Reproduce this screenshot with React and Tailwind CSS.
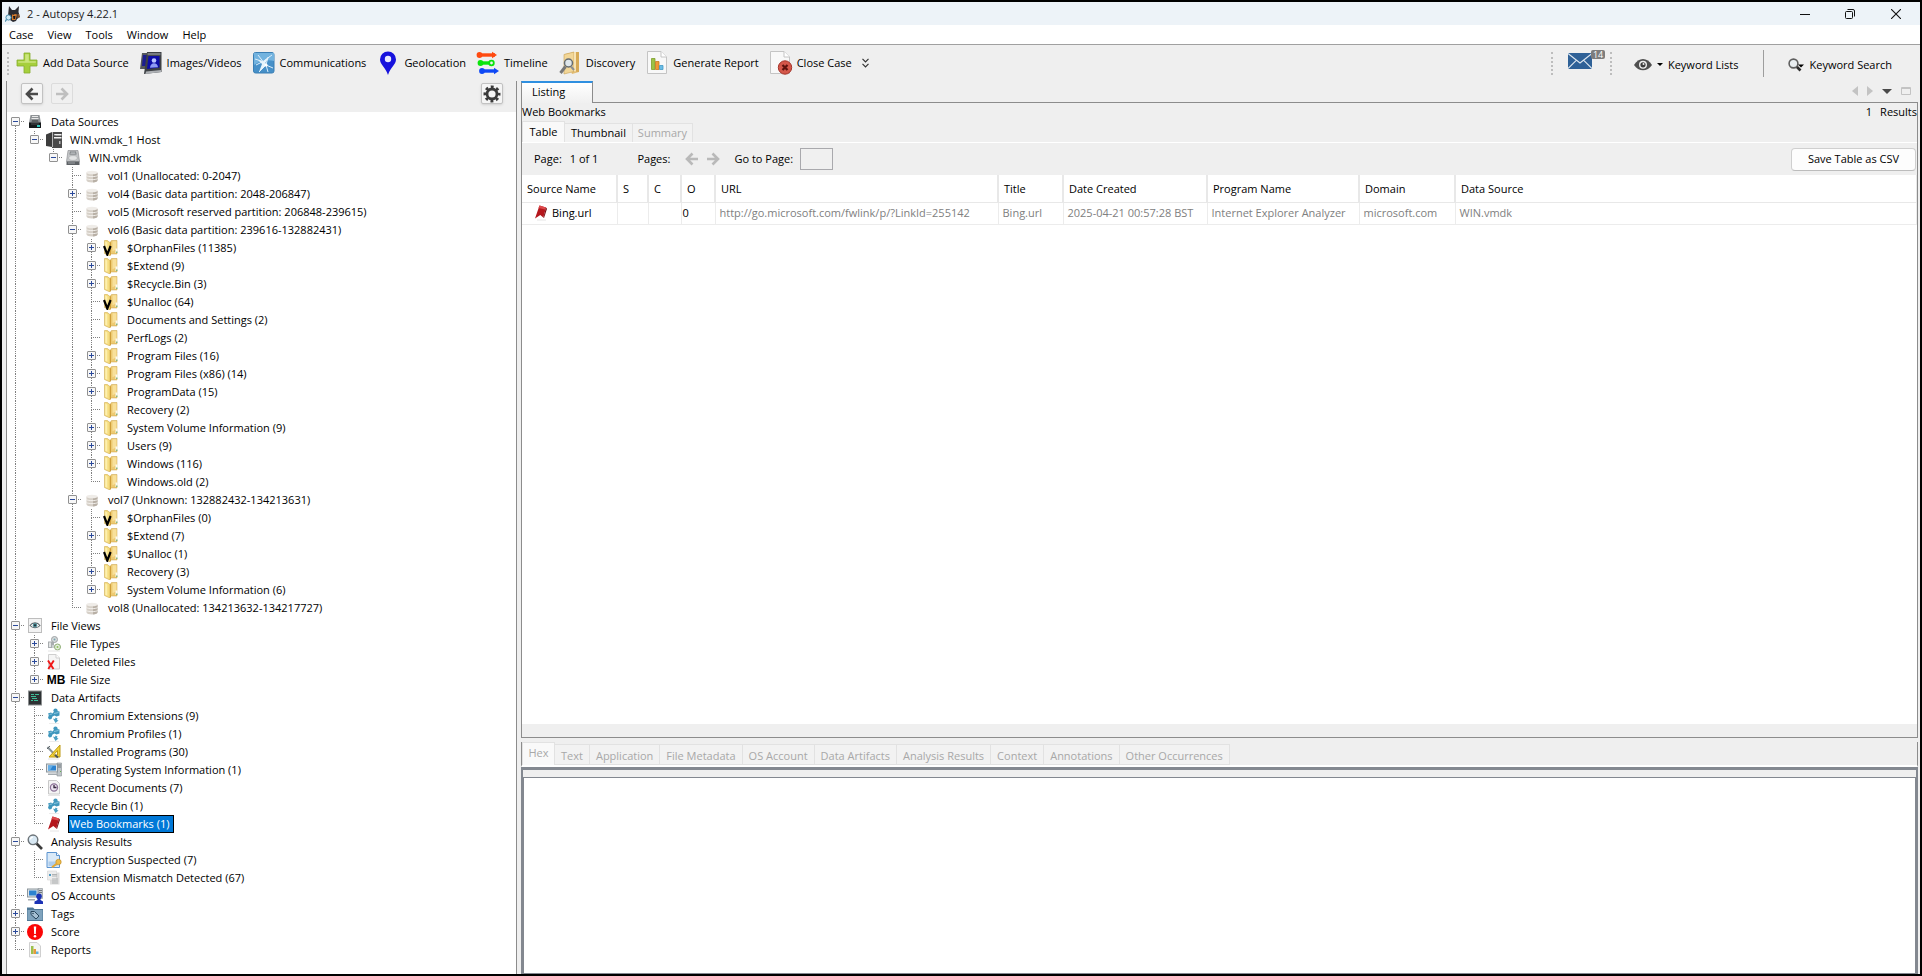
import { useState } from 'react';

/* ---------- Tree icons ---------- */

function Svg({ size = 16, box = 16, children }) {
  return (
    <svg width={size} height={size} viewBox={`0 0 ${box} ${box}`} className="shrink-0" aria-hidden="true">
      {children}
    </svg>
  );
}

const DrivesIcon = () => (
  <Svg>
    <path d="M3.500 1h9l1.500 8H2z" fill="#8f9396" />
    <path d="M5 2h6v1H5zM4.500 4h7v1h-7z" fill="#e8e8e8" />
    <path d="M5 6h6l.5 2h-7z" fill="#5b5e60" />
    <path d="M2 8.500h12V13.500a.5.5 0 0 1-.5.500h-11a.5.5 0 0 1-.5-.5z" fill="#16191b" />
    <path d="M4 9.500h8v1H4z" fill="#4a4e50" />
    <rect x="10" y="11" width="3" height="2" fill="#35c9c0" />
  </Svg>
);

const HostIcon = () => (
  <Svg>
    <path d="M0 2.500 6 0v15L0 14z" fill="#3d3d3d" />
    <path d="M6 0h10v16H6z" fill="#4b4b4b" />
    <path d="M6 0h1v15H6z" fill="#b5b5b5" />
    <path d="M8 2h7.500v1.500H8zM8 5h7.500v1.500H8z" fill="#f4f4f4" />
    <path d="M8 2.500 10 3.500H8z" fill="#4b4b4b" />
    <rect x="13" y="9" width="1.500" height="3" fill="#b8b8b8" />
  </Svg>
);

const DiskIcon = () => (
  <Svg>
    <path d="M3 .5h10l1.500 11h-13z" fill="#c3c5c7" stroke="#84878a" strokeWidth=".6" />
    <path d="M5 1.500h6l.5 3h-7z" fill="#6f7377" />
    <path d="M5.500 2.300h5M5.300 3.500h5.300" stroke="#dcdfe1" strokeWidth=".6" />
    <ellipse cx="8" cy="8" rx="4.300" ry="2.400" fill="#e3e4e5" stroke="#a4a7a9" strokeWidth=".6" />
    <path d="M1.500 11.500h13V15h-13z" fill="#5e6266" />
    <path d="M3 12.500h7v1H3z" fill="#9fa3a6" />
  </Svg>
);

const VolumeIcon = () => (
  <Svg>
    <path d="M2.500 4.500v8c0 1.300 2.500 2 5.500 2s5.500-.7 5.500-2v-8z" fill="#d6d0c8" />
    <path d="M9 5h4.500v7.500c0 1-2 1.800-4.500 2z" fill="#b8b0a6" />
    <ellipse cx="8" cy="4.500" rx="5.500" ry="1.800" fill="#efece8" />
    <path d="M2.500 7.500c1 1.500 10 1.500 11 0M2.500 10.500c1 1.500 10 1.500 11 0" fill="none" stroke="#f6f4f1" strokeWidth=".9" />
  </Svg>
);

const FolderShape = () => (
  <>
    <path d="M7 2.500 8.500 .5h5.500v13.500H7z" fill="#edca72" stroke="#c9a24a" strokeWidth=".5" />
    <path d="M9.500 1.300h4v8l-4 2z" fill="#f8e09a" />
    <path d="M1.500 .5 4 .3 7 2.500V16l-5.500-2.500z" fill="#f6dd80" stroke="#c79f3d" strokeWidth=".5" />
    <path d="M7 2.500 8 2v12.500L7 16z" fill="#cf9f3a" />
    <path d="M2.300 1.500 4.300 2.500v11.200l-2-.9z" fill="#fdf0b0" />
    <rect x="12.500" y="8.500" width="2" height="4.500" fill="#fbfaf0" />
    <rect x="13.200" y="11.500" width="1.200" height="1.500" fill="#6aa667" />
  </>
);

const FolderIcon = () => (
  <Svg>
    <FolderShape />
  </Svg>
);

const VirtualFolderIcon = () => (
  <Svg>
    <FolderShape />
    <path d="M1 6 4.300 14.500 7.600 6" fill="none" stroke="#000" strokeWidth="2.200" />
  </Svg>
);

const ViewsIcon = () => (
  <Svg>
    <rect x="1.500" y=".5" width="13" height="14" fill="#f3f3f3" stroke="#bdbdbd" />
    <path d="M3 7.500c2.500-3.500 7.500-3.500 10 0-2.500 3-7.500 3-10 0z" fill="#fff" stroke="#5f676b" strokeWidth="1.100" />
    <circle cx="8" cy="7.200" r="2.200" fill="#4e8b96" />
    <circle cx="8" cy="7.200" r="1" fill="#1d2b30" />
  </Svg>
);

const FileTypesIcon = () => (
  <Svg>
    <path d="M2 5.500h6V12H2z" fill="#a9adaf" />
    <path d="M3 6.500h2V11H3z" fill="#e2e4e5" />
    <circle cx="8.500" cy="3.500" r="3" fill="#d6dadb" stroke="#9da2a4" />
    <circle cx="8.500" cy="3.500" r="1" fill="#78a4ae" />
    <path d="M6 9h4v3H6z" fill="#ccd0d1" />
    <circle cx="11.500" cy="11" r="3" fill="#e3eedb" stroke="#8fae76" />
    <circle cx="11.500" cy="11" r="1" fill="#8fc25f" />
    <path d="M2 15h12" stroke="#e4e4e4" />
  </Svg>
);

const PageShape = () => (
  <path d="M2.500 .5h7.500l3.500 3.500v11h-11z" fill="#f5f5f5" stroke="#cfcfcf" />
);

const DeletedIcon = () => (
  <Svg>
    <PageShape />
    <path d="M10 .5V4h3.500" fill="#fff" stroke="#cfcfcf" />
    <path d="M2 6.500 7.500 15M7.800 6.500 2.300 15" stroke="#f01818" strokeWidth="1.900" />
  </Svg>
);

const SizeIcon = () => (
  <span className="flex w-0 justify-center">
    <b className="ml-[4px] font-['Liberation_Sans',sans-serif] text-[12px] leading-none font-bold">MB</b>
  </span>
);

const ArtifactsIcon = () => (
  <Svg>
    <rect x="1.500" y="1" width="13" height="14" fill="#2d3133" stroke="#8c8f90" />
    <path d="M4 4.500h3M8 4.500h4M4 6.500h5M5 8.500h5M4 10.500h2M7 10.500h4" stroke="#3fbf9a" strokeWidth="1.200" />
  </Svg>
);

const PuzzleIcon = () => (
  <Svg>
    <circle cx="9.500" cy="2.500" r="2.100" fill="#3f97bd" />
    <path d="M8.500 3h2.500l2.500.5v4L10.500 8.500 8.500 7.500 6.500 8.500 5.500 11 3.500 11.500 2 10l.8-3L2 5.500 5 4.500l1.500 1z" fill="#3f97bd" />
    <path d="M7 10.500 9 11l.5-1.500 2 1L11 12l1.500.5L9.500 15z" fill="#4a9fc2" />
    <path d="M8 5.500 12.500 4.500M3.500 6.500 6 6" stroke="#8cc5dd" />
    <path d="M3 15.500h10" stroke="#ececec" />
  </Svg>
);

const ProgramsIcon = () => (
  <Svg>
    <path d="M1.500 3 10 12" stroke="#8b9498" strokeWidth="2" />
    <path d="M1 5 4 2" stroke="#5e676b" />
    <path d="M14 1v12H3z" fill="#f2d338" stroke="#bd9916" />
    <path d="M11.500 6.500V11H7.500z" fill="#fff" stroke="#bd9916" />
    <path d="m9 11 3 2.500" stroke="#4c5458" strokeWidth="2" />
    <path d="M2 15h11" stroke="#e4e4e4" />
  </Svg>
);

const ComputerIcon = () => (
  <Svg>
    <path d="M11 1h4.500v13H11z" fill="#bfc5c9" stroke="#868d92" strokeWidth=".6" />
    <path d="M12 3h3M12 5h3" stroke="#71787d" />
    <rect x="14" y="9" width="1" height="1" fill="#5fb04a" />
    <rect x=".5" y="2" width="11" height="8" fill="#dfe4e8" stroke="#8b959c" />
    <rect x="2" y="3.500" width="8" height="5" fill="#2d83cf" />
    <path d="M2 3.500h5l-3 5H2z" fill="#66aee6" />
    <path d="M2 11.500h9.500V13H2z" fill="#a4abb0" />
  </Svg>
);

const RecentIcon = () => (
  <Svg>
    <path d="M2.500 .5h8l3 3v10.500h-11z" fill="#f4f4f4" stroke="#c9c9c9" />
    <circle cx="8" cy="7.500" r="3.600" fill="#e9e2ee" stroke="#8b7297" strokeWidth="1.200" />
    <path d="M8 5v2.500h2.500" fill="none" stroke="#35263d" strokeWidth="1.300" />
    <path d="M2 15.500h12" stroke="#e6e6e6" />
  </Svg>
);

const BookmarkIcon = () => (
  <Svg>
    <path d="M6.500 .5 13 2.500 10.300 12.500 7.300 10 2 13.500z" fill="#b5161c" />
    <path d="M6.500 .5 13 2.500l-.8 2L5.500 3z" fill="#dd4a4c" />
    <path d="m10.300 12.500 2.700-10 1 1.200L11 13z" fill="#7a0a10" />
    <path d="M4 15h9" stroke="#e6e6e6" />
  </Svg>
);

const AnalysisIcon = () => (
  <Svg>
    <path d="m9.500 9.500 5.500 5.500" stroke="#3a3a3a" strokeWidth="2.600" />
    <circle cx="6" cy="5.800" r="4.800" fill="#d8e8f3" stroke="#6c7378" strokeWidth="1.400" />
    <path d="M3.500 5.500a2.500 2.500 0 0 1 2.500-2.300" fill="none" stroke="#fff" strokeWidth="1.200" />
  </Svg>
);

const EncryptionIcon = () => (
  <Svg>
    <path d="M1 .5h9.500l3 3v12H1z" fill="#d9e9f8" stroke="#5b93cf" />
    <path d="M2.500 9.500h9V14h-9z" fill="#aecdec" />
    <path d="M10.500 .5v3h3" fill="#fff" stroke="#5b93cf" />
    <circle cx="12.500" cy="10" r="2.700" fill="#f0bd49" stroke="#b9831c" strokeWidth=".6" />
    <path d="m11 11.500-5 3.800" stroke="#e4a934" strokeWidth="2" />
  </Svg>
);

const MismatchIcon = () => (
  <Svg>
    <path d="M5 2.500h8.500v12H4V9z" fill="#dcdcdc" />
    <path d="M1.500 1h9v9h-9z" fill="#ededed" stroke="#d3d3d3" strokeWidth=".6" />
    <path d="M3 4h2v2H3z" fill="#4d9ac4" />
    <path d="M6 4.500h5M6 6h5M6 9h6M6 11h6M6 13h6" stroke="#b0b3b4" />
  </Svg>
);

const AccountsIcon = () => (
  <Svg>
    <path d="M11 .5h4.500v10H11z" fill="#c8cdd1" stroke="#868d92" strokeWidth=".6" />
    <path d="M12 2.500h3M12 4.500h3" stroke="#71787d" />
    <rect x=".5" y="1" width="10.500" height="8" fill="#dfe4e8" stroke="#8b959c" />
    <rect x="2" y="2.500" width="7.500" height="5" fill="#2d83cf" />
    <path d="M1 11h7v1.500H1z" fill="#a4abb0" />
    <circle cx="12" cy="8.200" r="2.800" fill="#1b32b5" />
    <path d="M10.500 10h3v2l2.500 1.500V16H7.500v-2.500l3-1.500z" fill="#1b32b5" />
  </Svg>
);

const TagsIcon = () => (
  <Svg>
    <path d="M0 1.500h6l1.500 1.500H16v12H0z" fill="#4f7896" />
    <path d="M.5 4h15v10H.5z" fill="#7fa3bd" />
    <path d="M4 5.500h3.500l4.500 4.500-3 3-5-4.500z" fill="#a5c0d3" stroke="#27455c" />
    <circle cx="6" cy="7.500" r=".8" fill="#27455c" />
  </Svg>
);

const ScoreIcon = () => (
  <Svg>
    <circle cx="8" cy="8" r="8" fill="#fb0606" />
    <path d="M6.800 2.500h2.400L8.800 10H7.200z" fill="#fff" />
    <circle cx="8" cy="12.300" r="1.300" fill="#fff" />
  </Svg>
);

const ReportsIcon = () => (
  <Svg>
    <PageShape />
    <path d="M4 4h2.500v8H4z" fill="#9bc04d" />
    <path d="M6.500 7H9v5H6.500z" fill="#e59b3c" />
    <path d="M9 9.500h2.500V12H9z" fill="#5fb0d9" />
  </Svg>
);

/* ---------- Toolbar icons ---------- */

const AddIcon = () => (
  <Svg size={22} box={22}>
    <path d="M8 1h6v7h7v6h-7v7H8v-7H1V8h7z" fill="#a6cf3c" stroke="#86ad2b" strokeWidth=".8" />
    <path d="M9.200 2.200h3.600v7h7v1.600H2.200V9.200h7z" fill="#cbe57d" />
  </Svg>
);

const ImagesIcon = () => (
  <Svg size={24} box={24}>
    <path d="M3 2h12v16H1z" fill="#55585c" />
    <path d="M4 4h4v11H3z" fill="#1b1d8f" />
    <path d="M8 1h14.500v20L5 23z" fill="#3d4044" />
    <path d="M8.500 2h13v2.200h-13z" fill="#777b80" />
    <path d="M9.500 5h11v11.500L8 18z" fill="#0d0ca6" />
    <circle cx="15" cy="9.500" r="2.300" fill="#b9c4ff" />
    <path d="M11 16.800c.2-3 2-4.500 4-4.500s3.800 1.500 4 3.900z" fill="#8f9bf5" />
    <path d="M7 20.500 22 19v2L6.500 23z" fill="#aeb1b5" />
  </Svg>
);

const CommunicationsIcon = () => (
  <Svg size={22} box={22}>
    <rect x=".5" y=".5" width="20.500" height="20.500" rx="2" fill="#4690c8" stroke="#3b7fb4" />
    <path d="M1 1h20v8C14 7 7 9 1 13z" fill="#72b3df" />
    <path d="M2 7 10 9.500 19 3M10 9.500 13 13 20 16M13 13 6 20M10 9.500 5 3M13 13 15 5M13 13l2 7M3 13l7-3.500" fill="none" stroke="#dceefa" strokeWidth="1" />
    <path d="m5 8 5 1.500L17 4l-4.500 6.500.5 2.500L6 20l3-8z" fill="#e6f4fc" />
    <circle cx="13" cy="13" r="1.600" fill="#fff" />
  </Svg>
);

const GeolocationIcon = () => (
  <Svg size={24} box={24}>
    <path d="M12 .5a8 8 0 0 1 8 8c0 5-5.500 7.500-8 15.500C9.500 16 4 13.500 4 8.500a8 8 0 0 1 8-8z" fill="#1712dd" />
    <circle cx="12" cy="8" r="3.200" fill="#e9eaff" />
  </Svg>
);

const TimelineIcon = () => (
  <Svg size={24} box={24}>
    <path d="M3 4h16" stroke="#ff4a10" strokeWidth="3.400" />
    <circle cx="3.500" cy="4" r="2.900" fill="#ff4a10" />
    <path d="m16 .8 5 3.200-5 3.200z" fill="#ff4a10" />
    <path d="M4 12h11" stroke="#0be40b" strokeWidth="3.400" />
    <circle cx="4.500" cy="12" r="2.900" fill="#0be40b" />
    <circle cx="15.500" cy="12" r="2.300" fill="#efefef" stroke="#0be40b" strokeWidth="1.800" />
    <path d="M6 20h14" stroke="#0f48f5" strokeWidth="3.400" />
    <circle cx="6" cy="20" r="2.900" fill="#0f48f5" />
    <path d="m18 16.800 5 3.200-5 3.200z" fill="#0f48f5" />
  </Svg>
);

const DiscoveryIcon = () => (
  <Svg size={24} box={24}>
    <path d="M7 3 16 1h5v20l-7 2z" fill="#e2bd74" />
    <path d="M6 3.500 16 1v19.500L6 23z" fill="#f2d697" stroke="#c79f53" strokeWidth=".6" />
    <path d="M16 1h5v20l-5-.5z" fill="#d6a956" />
    <path d="M16 1h2v19.500h-2z" fill="#f7e3b4" />
    <path d="M7.500 15.500 2.500 22" stroke="#777" strokeWidth="3" />
    <circle cx="10.500" cy="12" r="4" fill="#dfe7ec" stroke="#666c70" strokeWidth="1.500" />
    <path d="M13 15.500 16 19" stroke="#8b8f92" strokeWidth="2" />
  </Svg>
);

const GenerateIcon = () => (
  <Svg size={24} box={24}>
    <path d="M2.500 .5H16l5.500 5.500v16.500h-19z" fill="#f8f8f8" stroke="#c4c4c4" />
    <path d="M16 .5V6h5.500" fill="#fff" stroke="#c4c4c4" />
    <path d="M6.500 7.500h3.500v11H6.500z" fill="#9dc246" stroke="#7da02d" strokeWidth=".8" />
    <path d="M10.500 10.500H14v8h-3.500z" fill="#ee9a38" stroke="#c97a20" strokeWidth=".8" />
    <path d="M14.500 14.500H18v4h-3.500z" fill="#69bde6" stroke="#4498c4" strokeWidth=".8" />
  </Svg>
);

const CloseCaseIcon = () => (
  <Svg size={24} box={24}>
    <path d="M1.500 .5H15l5.500 5.500v16.500h-19z" fill="#f8f8f8" stroke="#c4c4c4" />
    <path d="M15 .5V6h5.500" fill="#fff" stroke="#c4c4c4" />
    <circle cx="16" cy="16.500" r="6.700" fill="#d4574a" stroke="#a5352b" />
    <path d="m13.500 14 5 5m0-5-5 5" stroke="#5c120d" strokeWidth="2.200" />
  </Svg>
);

const AutopsyLogo = () => (
  <Svg>
    <path d="M4 0 7 4l3 0 4-4-.5 6 1.500 5-3 2-1 2-3 1-3-2-2-4z" fill="#2c2b30" />
    <path d="m7 8 1 1 2-1 2 0.500L10.500 14H7z" fill="#d47a2c" />
    <path d="M8 10h2.500l-.5 3h-1.500z" fill="#1a1a1c" />
    <path d="M12.500 9h2M12.500 11h2" stroke="#d47a2c" />
    <circle cx="3.500" cy="11.500" r="2.600" fill="#cfeaf6" stroke="#4b8cab" />
    <path d="M1.500 13.500 0 15.500" stroke="#4b8cab" strokeWidth="1.300" />
  </Svg>
);

const ArrowIcon = ({ flip, color }) => (
  <svg width="14" height="14" viewBox="0 0 14 14" className={flip ? 'rotate-180' : ''} aria-hidden="true">
    <path d="M13 7H2.500M7.500 1.500 2 7l5.500 5.500" fill="none" stroke={color} strokeWidth="2.600" />
  </svg>
);

const GearIcon = () => (
  <Svg size={18} box={18}>
    <circle cx="9" cy="9" r="7" fill="none" stroke="#3b3b3b" strokeWidth="3" strokeDasharray="2.800 2.698" strokeDashoffset="1.400" />
    <circle cx="9" cy="9" r="5" fill="none" stroke="#3b3b3b" strokeWidth="2.800" />
  </Svg>
);

/* ---------- Data ---------- */

const folder = (label, children) => ({ label, icon: FolderIcon, children });
const virtual = (label, children) => ({ label, icon: VirtualFolderIcon, children });
const volume = (label, children) => ({ label, icon: VolumeIcon, children });

// children: [] -> has children that are not loaded, so it shows a plus
const TREE = [
  {
    label: 'Data Sources',
    icon: DrivesIcon,
    children: [
      {
        label: 'WIN.vmdk_1 Host',
        icon: HostIcon,
        children: [
          {
            label: 'WIN.vmdk',
            icon: DiskIcon,
            children: [
              volume('vol1 (Unallocated: 0-2047)'),
              volume('vol4 (Basic data partition: 2048-206847)', []),
              volume('vol5 (Microsoft reserved partition: 206848-239615)'),
              volume('vol6 (Basic data partition: 239616-132882431)', [
                virtual('$OrphanFiles (11385)', []),
                folder('$Extend (9)', []),
                folder('$Recycle.Bin (3)', []),
                virtual('$Unalloc (64)'),
                folder('Documents and Settings (2)'),
                folder('PerfLogs (2)'),
                folder('Program Files (16)', []),
                folder('Program Files (x86) (14)', []),
                folder('ProgramData (15)', []),
                folder('Recovery (2)'),
                folder('System Volume Information (9)', []),
                folder('Users (9)', []),
                folder('Windows (116)', []),
                folder('Windows.old (2)'),
              ]),
              volume('vol7 (Unknown: 132882432-134213631)', [
                virtual('$OrphanFiles (0)'),
                folder('$Extend (7)', []),
                virtual('$Unalloc (1)'),
                folder('Recovery (3)', []),
                folder('System Volume Information (6)', []),
              ]),
              volume('vol8 (Unallocated: 134213632-134217727)'),
            ],
          },
        ],
      },
    ],
  },
  {
    label: 'File Views',
    icon: ViewsIcon,
    children: [
      { label: 'File Types', icon: FileTypesIcon, children: [] },
      { label: 'Deleted Files', icon: DeletedIcon, children: [] },
      { label: 'File Size', icon: SizeIcon, children: [] },
    ],
  },
  {
    label: 'Data Artifacts',
    icon: ArtifactsIcon,
    children: [
      { label: 'Chromium Extensions (9)', icon: PuzzleIcon },
      { label: 'Chromium Profiles (1)', icon: PuzzleIcon },
      { label: 'Installed Programs (30)', icon: ProgramsIcon },
      { label: 'Operating System Information (1)', icon: ComputerIcon },
      { label: 'Recent Documents (7)', icon: RecentIcon },
      { label: 'Recycle Bin (1)', icon: PuzzleIcon },
      { label: 'Web Bookmarks (1)', icon: BookmarkIcon },
    ],
  },
  {
    label: 'Analysis Results',
    icon: AnalysisIcon,
    children: [
      { label: 'Encryption Suspected (7)', icon: EncryptionIcon },
      { label: 'Extension Mismatch Detected (67)', icon: MismatchIcon },
    ],
  },
  { label: 'OS Accounts', icon: AccountsIcon },
  { label: 'Tags', icon: TagsIcon, children: [] },
  { label: 'Score', icon: ScoreIcon, children: [] },
  { label: 'Reports', icon: ReportsIcon },
];

const TOOLS = [
  { label: 'Add Data Source', icon: AddIcon },
  { label: 'Images/Videos', icon: ImagesIcon },
  { label: 'Communications', icon: CommunicationsIcon },
  { label: 'Geolocation', icon: GeolocationIcon },
  { label: 'Timeline', icon: TimelineIcon },
  { label: 'Discovery', icon: DiscoveryIcon },
  { label: 'Generate Report', icon: GenerateIcon },
  { label: 'Close Case', icon: CloseCaseIcon },
];

const COLUMNS = [
  { name: 'Source Name', width: 'w-[95px]' },
  { name: 'S', width: 'w-[31px]' },
  { name: 'C', width: 'w-[33px]' },
  { name: 'O', width: 'w-[34px]' },
  { name: 'URL', width: 'w-[283px]' },
  { name: 'Title', width: 'w-[65px]' },
  { name: 'Date Created', width: 'w-[144px]' },
  { name: 'Program Name', width: 'w-[152px]' },
  { name: 'Domain', width: 'w-[96px]' },
  { name: 'Data Source', width: '' },
];

const ROW = [
  'http://go.microsoft.com/fwlink/p/?LinkId=255142',
  'Bing.url',
  '2025-04-21 00:57:28 BST',
  'Internet Explorer Analyzer',
  'microsoft.com',
  'WIN.vmdk',
];

const CONTENT_TABS = [
  'Text',
  'Application',
  'File Metadata',
  'OS Account',
  'Data Artifacts',
  'Analysis Results',
  'Context',
  'Annotations',
  'Other Occurrences',
];

/* ---------- Tree ---------- */

// One 19px column of the dotted connector lines
function Guide({ up, down, across, children }) {
  return (
    <span className="relative h-[18px] w-[19px] shrink-0">
      <svg width="19" height="18" aria-hidden="true">
        <g stroke="#808080" strokeDasharray="1 1">
          {up && <path d="M8.500 0V9" />}
          {down && <path d="M8.500 9V18" />}
          {across && <path d="M8 8.500H18" />}
        </g>
      </svg>
      {children}
    </span>
  );
}

function TreeNode({ node, trail, first, last, selected, onSelect }) {
  const [open, setOpen] = useState(Boolean(node.children?.length));
  const Icon = node.icon;
  const isSelected = selected === node.label;

  return (
    <li role="treeitem" aria-selected={isSelected}>
      <div className="flex h-[18px] items-center">
        {trail.map((more, i) => (
          <Guide key={i} up={more} down={more} />
        ))}
        <Guide up={!first} down={!last} across>
          {node.children && (
            <button
              type="button"
              aria-label={open ? 'Collapse' : 'Expand'}
              onClick={() => setOpen(!open)}
              className="absolute top-[4px] left-[4px] flex size-[9px] items-center justify-center rounded-[1px] border border-[#919191] bg-[#f7f7f7]"
            >
              <svg width="5" height="5" aria-hidden="true">
                <path d={open ? 'M0 2.500h5' : 'M0 2.500h5M2.500 0v5'} stroke="#2b4a9b" />
              </svg>
            </button>
          )}
        </Guide>
        <span className="flex w-[18px] shrink-0 justify-center">
          <Icon />
        </span>
        <button
          type="button"
          onClick={() => onSelect(node.label)}
          className={`ml-[5px] h-[18px] border pr-[3px] pl-px leading-[16px] whitespace-nowrap ${
            isSelected ? 'border-black bg-[#0078d7] text-white' : 'border-transparent'
          }`}
        >
          {node.label}
        </button>
      </div>
      {open && node.children?.length > 0 && (
        <ul role="group">
          {node.children.map((child, i) => (
            <TreeNode
              key={child.label}
              node={child}
              trail={[...trail, !last]}
              first={false}
              last={i === node.children.length - 1}
              selected={selected}
              onSelect={onSelect}
            />
          ))}
        </ul>
      )}
    </li>
  );
}

function Explorer() {
  const [selected, setSelected] = useState('Web Bookmarks (1)');

  return (
    <aside className="flex w-[511px] shrink-0 flex-col border-x border-[#8c8c8c]">
      <div className="flex h-[31px] items-start gap-[8px] bg-[#efefef] pt-[2px] pr-[13px] pl-[14px]">
        <button type="button" aria-label="Back" className="flex h-[21px] w-[22px] items-center justify-center rounded-[2px] border border-[#c2c2c2] bg-[#f5f5f5] shadow-sm">
          <ArrowIcon color="#4a4a4a" />
        </button>
        <button type="button" aria-label="Forward" disabled className="flex h-[21px] w-[22px] items-center justify-center rounded-[2px] border border-[#dcdcdc] bg-[#f0f0f0]">
          <ArrowIcon flip color="#bfbfbf" />
        </button>
        <button type="button" aria-label="Options" className="ml-auto flex h-[21px] w-[22px] items-center justify-center rounded-[2px] border border-[#c2c2c2] bg-[#f5f5f5] shadow-sm">
          <GearIcon />
        </button>
      </div>
      <ul role="tree" className="min-h-0 flex-1 overflow-hidden bg-white pt-px">
        {TREE.map((node, i) => (
          <TreeNode
            key={node.label}
            node={node}
            trail={[]}
            first={i === 0}
            last={i === TREE.length - 1}
            selected={selected}
            onSelect={setSelected}
          />
        ))}
      </ul>
    </aside>
  );
}

/* ---------- Window chrome ---------- */

function TitleBar() {
  return (
    <header className="flex h-[23px] shrink-0 items-center bg-[#edf3f8] pl-[3px]">
      <AutopsyLogo />
      <h1 className="ml-[6px] text-[#1c1c1c]">2 - Autopsy 4.22.1</h1>
      <div className="ml-auto flex items-center">
        <button type="button" aria-label="Minimize" className="flex h-[23px] w-[46px] items-center justify-center">
          <svg width="10" height="10"><path d="M0 5.500h10" stroke="#111" /></svg>
        </button>
        <button type="button" aria-label="Restore" className="flex h-[23px] w-[44px] items-center justify-center">
          <svg width="10" height="10" fill="none" stroke="#111">
            <rect x=".5" y="2.500" width="7" height="7" rx="1" />
            <path d="M2.500 .5H8a1.500 1.500 0 0 1 1.500 1.500v5.500" />
          </svg>
        </button>
        <button type="button" aria-label="Close" className="flex h-[23px] w-[48px] items-center justify-center">
          <svg width="10" height="10"><path d="m0 0 10 10M10 0 0 10" stroke="#111" strokeWidth="1.100" /></svg>
        </button>
      </div>
    </header>
  );
}

function MenuBar() {
  return (
    <nav className="flex h-[20px] shrink-0 items-center gap-[14px] border-b border-[#a0a0a0] bg-white pl-[7px]">
      {['Case', 'View', 'Tools', 'Window', 'Help'].map((item) => (
        <button key={item} type="button">{item}</button>
      ))}
    </nav>
  );
}

const Handle = () => <span className="h-[23px] w-0 border-l-2 border-dotted border-[#bdbdbd]" />;

function ToolBar() {
  return (
    <div className="flex h-[36px] shrink-0 items-center pr-[28px] pl-[5px]">
      <Handle />
      <div className="flex items-center gap-[10px] pl-[6px]">
        {TOOLS.map(({ label, icon: Icon }) => (
          <button key={label} type="button" className="flex items-center gap-[4px] whitespace-nowrap">
            <span className="flex w-[24px] justify-center"><Icon /></span>
            {label}
          </button>
        ))}
        <button type="button" aria-label="More">
          <svg width="7" height="10" fill="none" stroke="#333" strokeWidth="1.200"><path d="m.5 .8 3 3 3-3M.5 5.800l3 3 3-3" /></svg>
        </button>
      </div>

      <div className="ml-auto flex items-center">
        <Handle />
        <button type="button" aria-label="14 messages" className="relative mr-[18px] mb-[4px] ml-[15px]">
          <svg width="24" height="16" viewBox="0 0 24 16" className="block">
            <path d="M0 0h24v16H0z" fill="#2f6197" />
            <path d="m0 .5 12 9.500L24 .5M0 15.500l8.500-8.300M24 15.500l-8.500-8.300" fill="none" stroke="#dfe8f1" strokeWidth="1.100" />
          </svg>
          <span className="absolute -top-[3px] left-[23px] rounded-[2px] bg-[#7d7d7d] px-[2px] text-[9px] leading-[9px] text-white">14</span>
        </button>
        <Handle />
        <button type="button" className="ml-[22px] flex items-center gap-[5px] pt-[3px]">
          <svg width="18" height="12" viewBox="0 0 18 12">
            <path d="M0 6c4.500-8 13.500-8 18 0-4.500 7-13.500 7-18 0z" fill="#4f4f4f" />
            <circle cx="9" cy="5.800" r="4" fill="#efefef" />
            <circle cx="9" cy="5.800" r="2.600" fill="#3d3d3d" />
            <circle cx="9.500" cy="5" r="1" fill="#efefef" />
          </svg>
          <svg width="6" height="3"><path d="M0 0h6L3 3z" /></svg>
          Keyword Lists
        </button>
        <span className="ml-[24px] h-[27px] w-px bg-[#9d9d9d]" />
        <button type="button" className="ml-[24px] flex items-center gap-[6px] pt-[3px]">
          <svg width="16" height="14" viewBox="0 0 16 14">
            <path d="m8.500 8.500 4 4" stroke="#2c2c2c" strokeWidth="2.600" />
            <circle cx="5.500" cy="5.500" r="4.400" fill="#e9eef1" stroke="#5f5f5f" strokeWidth="1.600" />
            <path d="M10 6.500h6l-3 3z" />
          </svg>
          Keyword Search
        </button>
      </div>
    </div>
  );
}

/* ---------- Listing ---------- */

function Listing() {
  return (
    <section className="flex min-h-0 flex-1 flex-col">
      <div className="flex h-[22px] shrink-0">
        <button type="button" className="w-[72px] border-x border-t-2 border-x-[#8c8c8c] border-t-[#2f8fe0] bg-gradient-to-b from-white to-[#f0f0f0] pb-[2px] pl-[10px] text-left">
          Listing
        </button>
        <div className="flex flex-1 items-center justify-end gap-[9px] border-b border-[#8c8c8c] pr-[7px] pb-px">
          <button type="button" aria-label="Scroll left" disabled><svg width="6" height="10"><path d="M6 0v10L0 5z" fill="#c3c3c3" /></svg></button>
          <button type="button" aria-label="Scroll right" disabled><svg width="6" height="10"><path d="M0 0v10l6-5z" fill="#c3c3c3" /></svg></button>
          <button type="button" aria-label="Show tabs"><svg width="10" height="5"><path d="M0 0h10L5 5z" fill="#4a4a4a" /></svg></button>
          <button type="button" aria-label="Maximize"><svg width="10" height="8"><path d="M.5 .5h9v7h-9zM.5 1.500h9" fill="none" stroke="#c3c3c3" /></svg></button>
        </div>
      </div>

      <div className="flex min-h-0 flex-1 flex-col border-x border-b border-[#8c8c8c]">
        <div className="flex h-[18px] shrink-0 items-center justify-between">
          <h2>Web Bookmarks</h2>
          <span className="flex gap-[8px]"><span>1</span><span>Results</span></span>
        </div>

        <div className="flex h-[22px] shrink-0 items-end border-b border-white">
          <button type="button" className="h-[21px] w-[43px] border border-b-0 border-[#e2e2e2] bg-[#f9f9f9]">Table</button>
          <button type="button" className="h-[19px] w-[68px] border-t border-r border-[#e2e2e2] bg-[#f2f2f2]">Thumbnail</button>
          <button type="button" disabled className="h-[19px] w-[60px] border-t border-r border-[#e2e2e2] bg-[#f2f2f2] text-[#a8a8a8]">Summary</button>
        </div>

        <div className="flex h-[32px] shrink-0 items-center pr-px pl-[12px]">
          <span>Page:</span>
          <span className="ml-[8px]">1 of 1</span>
          <span className="ml-[39px]">Pages:</span>
          <button type="button" aria-label="Previous page" disabled className="ml-[15px] w-[16px]"><ArrowIcon color="#b9b9b9" /></button>
          <button type="button" aria-label="Next page" disabled className="ml-[5px] w-[16px]"><ArrowIcon flip color="#b9b9b9" /></button>
          <label htmlFor="goto" className="ml-[12px]">Go to Page:</label>
          <input id="goto" type="text" className="ml-[7px] h-[22px] w-[33px] border border-[#a9a9ad] bg-[#f0f0f0] px-1" />
          <button type="button" className="ml-auto h-[23px] w-[125px] rounded-[4px] border border-[#cfcfcf] border-b-[#bcbcbc] bg-[#fdfdfd]">
            Save Table as CSV
          </button>
        </div>

        <div className="min-h-0 flex-1 bg-white">
          <table className="w-full table-fixed border-collapse text-left">
            <thead>
              <tr className="h-[27px]">
                {COLUMNS.map((col) => (
                  <th key={col.name} className={`border-r-2 border-b border-[#e8e8e8] pt-[2px] pl-[5px] font-normal last:border-r ${col.width}`}>
                    {col.name}
                  </th>
                ))}
              </tr>
            </thead>
            <tbody>
              <tr className="h-[22px] border-b border-[#ececec] text-[#808080]">
                <td className="border-r border-[#ececec] pl-[11px] text-black">
                  <span className="flex items-center gap-[3px]"><BookmarkIcon />Bing.url</span>
                </td>
                <td className="border-r border-[#ececec]" />
                <td className="border-r border-[#ececec]" />
                <td className="border-r border-[#ececec] pl-px text-black">0</td>
                {ROW.map((cell, i) => (
                  <td key={i} className="truncate border-r border-[#ececec] pl-[4px]">{cell}</td>
                ))}
              </tr>
            </tbody>
          </table>
        </div>
        <div className="h-[13px] shrink-0" />
      </div>
    </section>
  );
}

function ContentViewer() {
  return (
    <section className="mt-[4px] flex h-[232px] shrink-0 flex-col">
      <div className="flex h-[25px] shrink-0 items-end border-x border-b-2 border-x-[#8c8c8c] border-b-white text-[#a8a8a8]">
        <button type="button" disabled className="h-[23px] w-[33px] border border-b-0 border-[#e2e2e2] bg-[#f9f9f9] pb-[2px]">Hex</button>
        {CONTENT_TABS.map((tab) => (
          <button key={tab} type="button" disabled className="h-[21px] border-t border-r border-b border-[#e2e2e2] bg-[#f2f2f2] px-[6px] pt-[2px] whitespace-nowrap">
            {tab}
          </button>
        ))}
      </div>
      <div className="flex min-h-0 flex-1 flex-col border-x-2 border-t-3 border-b border-[#838890]">
        <div className="h-[7px] shrink-0" />
        <div className="flex-1 border-x border-t border-[#838890] bg-white" />
      </div>
    </section>
  );
}

function App() {
  return (
    <div className="flex h-screen min-h-[600px] w-full flex-col overflow-hidden border-2 border-black bg-[#efefef] font-['Open_Sans',sans-serif] text-[11px] leading-[16px] text-black">
      <TitleBar />
      <MenuBar />
      <ToolBar />
      <div className="flex min-h-0 flex-1 pr-[2px] pl-[4px]">
        <Explorer />
        <main className="ml-[4px] flex min-w-0 flex-1 flex-col">
          <Listing />
          <ContentViewer />
        </main>
      </div>
    </div>
  );
}

export default App;
